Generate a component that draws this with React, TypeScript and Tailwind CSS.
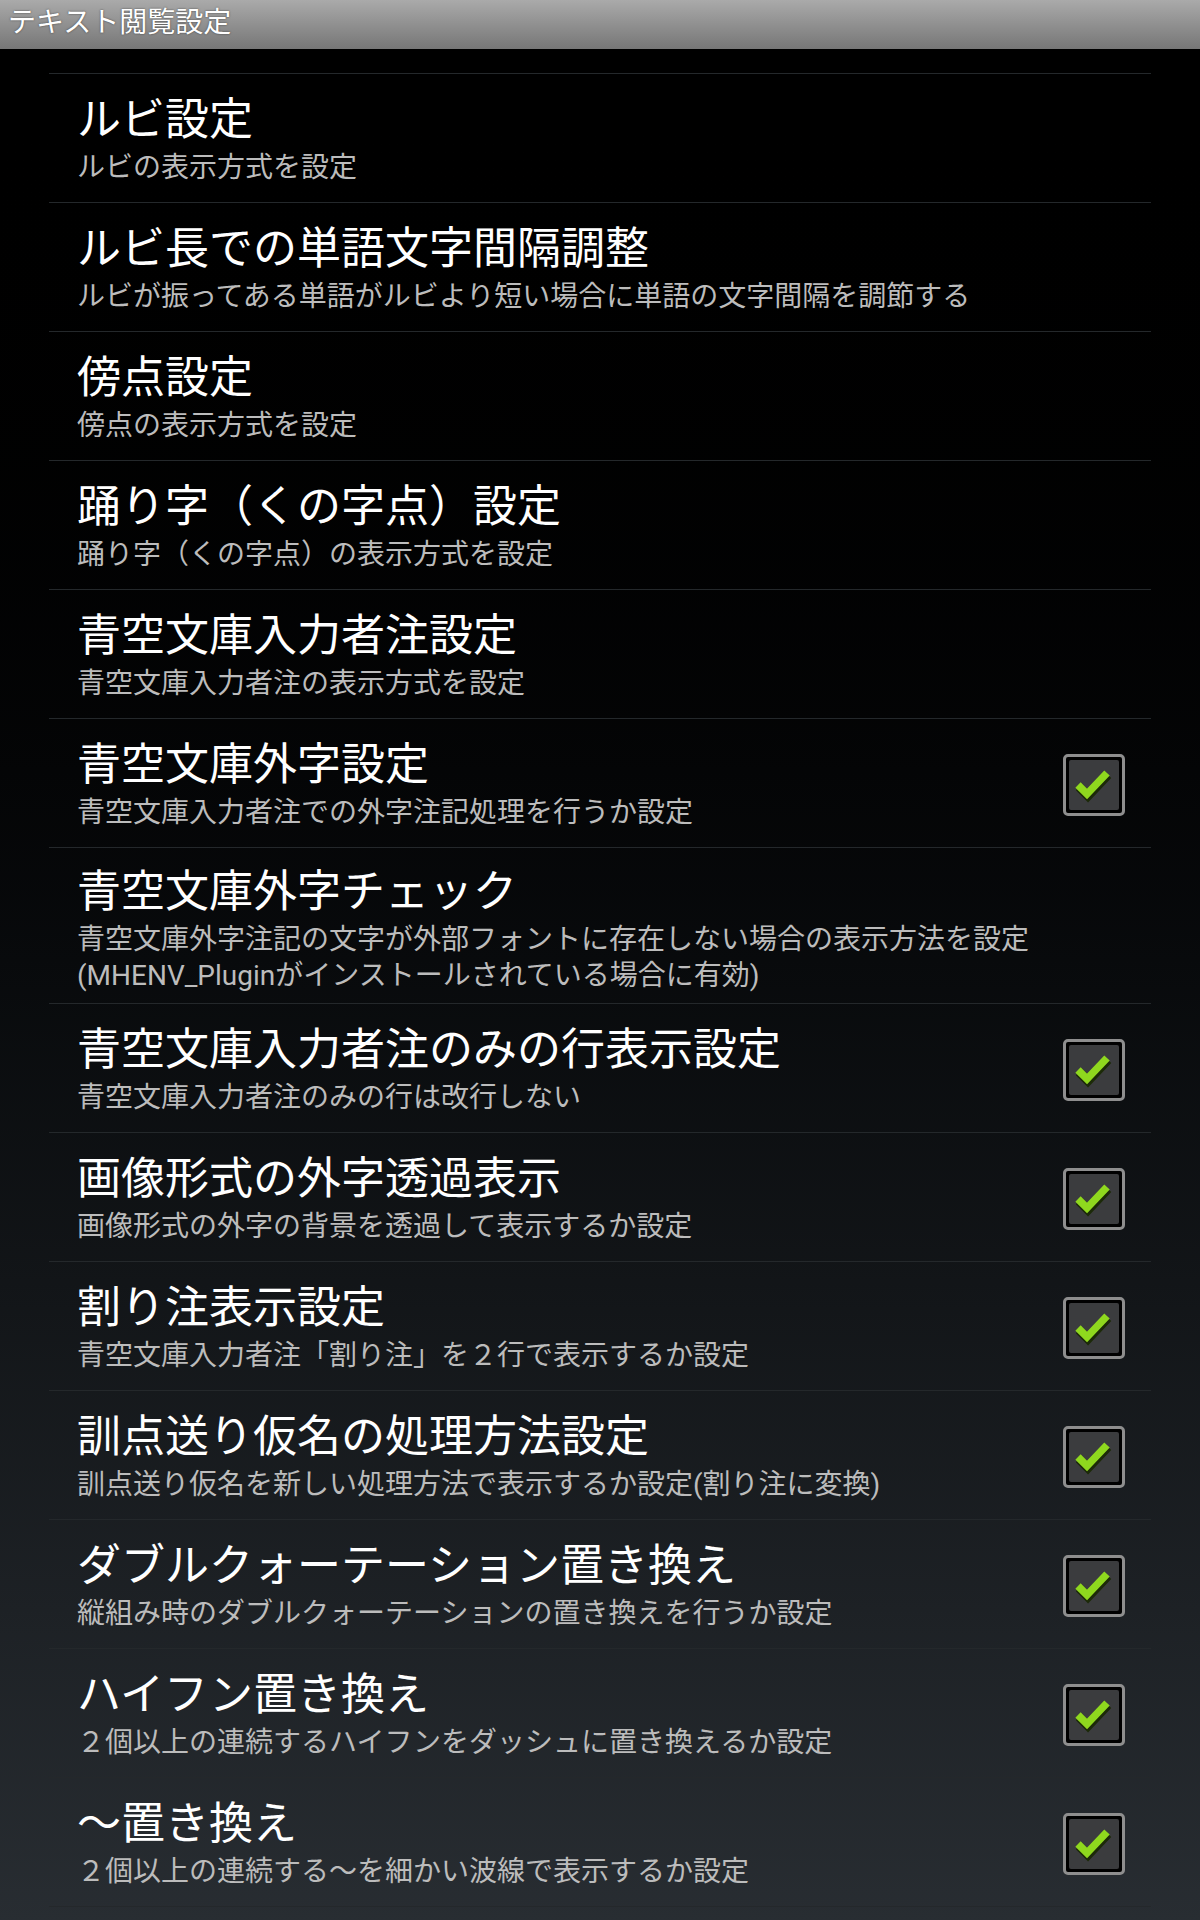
import type { ReactNode } from 'react';

// Android-style "text viewing settings" preference list.

interface Pref {
  title: string;
  summary: ReactNode;
  checked?: boolean;
  tall?: boolean;
}

const PREFS: Pref[] = [
  { title: 'ルビ設定', summary: 'ルビの表示方式を設定' },
  {
    title: 'ルビ長での単語文字間隔調整',
    summary: 'ルビが振ってある単語がルビより短い場合に単語の文字間隔を調節する',
  },
  { title: '傍点設定', summary: '傍点の表示方式を設定' },
  { title: '踊り字（くの字点）設定', summary: '踊り字（くの字点）の表示方式を設定' },
  { title: '青空文庫入力者注設定', summary: '青空文庫入力者注の表示方式を設定' },
  {
    title: '青空文庫外字設定',
    summary: '青空文庫入力者注での外字注記処理を行うか設定',
    checked: true,
  },
  {
    title: '青空文庫外字チェック',
    summary: (
      <>
        青空文庫外字注記の文字が外部フォントに存在しない場合の表示方法を設定
        <br />
        (MHENV_Pluginがインストールされている場合に有効)
      </>
    ),
    tall: true,
  },
  {
    title: '青空文庫入力者注のみの行表示設定',
    summary: '青空文庫入力者注のみの行は改行しない',
    checked: true,
  },
  {
    title: '画像形式の外字透過表示',
    summary: '画像形式の外字の背景を透過して表示するか設定',
    checked: true,
  },
  {
    title: '割り注表示設定',
    summary: '青空文庫入力者注「割り注」を２行で表示するか設定',
    checked: true,
  },
  {
    title: '訓点送り仮名の処理方法設定',
    summary: '訓点送り仮名を新しい処理方法で表示するか設定(割り注に変換)',
    checked: true,
  },
  {
    title: 'ダブルクォーテーション置き換え',
    summary: '縦組み時のダブルクォーテーションの置き換えを行うか設定',
    checked: true,
  },
  {
    title: 'ハイフン置き換え',
    summary: '２個以上の連続するハイフンをダッシュに置き換えるか設定',
    checked: true,
  },
  {
    title: '～置き換え',
    summary: '２個以上の連続する～を細かい波線で表示するか設定',
    checked: true,
  },
];

function CheckBox() {
  return (
    <div className="w-[62px] h-[62px] shrink-0 rounded-[5px] border-[3px] border-[#8e8e8e] bg-black p-[3px]">
      <div className="w-full h-full rounded-[2px] bg-[#3b3c3e] flex items-center justify-center">
        <svg width="50" height="50" viewBox="0 0 50 50">
          <polyline
            points="9,25 18,34 38,13"
            fill="none"
            stroke="#1c2a08"
            strokeWidth="9"
            strokeLinejoin="miter"
            transform="translate(1,2)"
          />
          <polyline
            points="9,25 18,34 38,13"
            fill="none"
            stroke="#8fd81e"
            strokeWidth="7.5"
            strokeLinejoin="miter"
          />
        </svg>
      </div>
    </div>
  );
}

function PrefRow({ pref }: { pref: Pref }) {
  return (
    <div
      className={`flex items-center border-t border-[#24282b] pl-[28px] pr-[26px] ${
        pref.tall ? 'pt-[18px] pb-[9px]' : 'pt-[20px] pb-[16px]'
      }`}
    >
      <div className="flex-1 min-w-0">
        <div className="text-[44px] leading-[52px] text-white whitespace-nowrap">{pref.title}</div>
        <div className="mt-[4px] text-[28px] leading-[36px] text-[#bcbcbc] whitespace-nowrap">
          {pref.summary}
        </div>
      </div>
      {pref.checked && <CheckBox />}
    </div>
  );
}

export default function App() {
  return (
    <div className="w-[1200px] min-h-[1920px] flex flex-col bg-black font-[Roboto,'Noto_Sans_CJK_JP',sans-serif]">
      <div className="h-[49px] shrink-0 flex items-center pl-[8px] pb-[3px] bg-linear-to-b from-[#aaaaaa] to-[#777777]">
        <span className="text-[28px] leading-[36px] text-white [text-shadow:0_0_2px_rgba(0,0,0,0.6)]">
          テキスト閲覧設定
        </span>
      </div>
      <div className="flex-1 bg-linear-to-b from-black to-[#282d32] pt-[24px] pb-[14px]">
        <div className="mx-[49px] border-b border-[#24282b]">
          {PREFS.map((p) => (
            <PrefRow key={p.title} pref={p} />
          ))}
        </div>
      </div>
    </div>
  );
}
